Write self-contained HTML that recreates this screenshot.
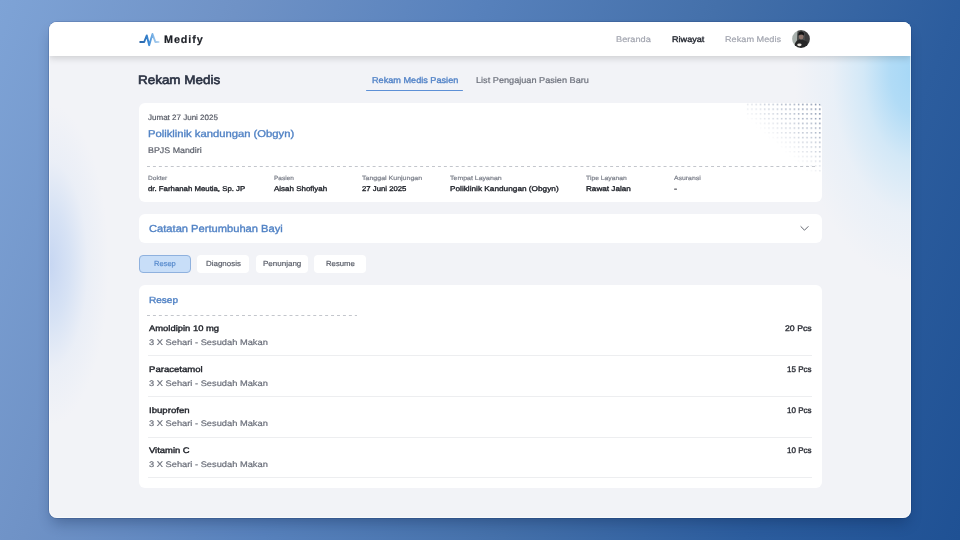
<!DOCTYPE html>
<html><head><meta charset="utf-8"><title>Medify - Rekam Medis</title>
<style>
html,body{margin:0;padding:0;}
body{width:960px;height:540px;overflow:hidden;position:relative;font-family:"Liberation Sans",sans-serif;background:linear-gradient(112deg,#7ea3d6 0%,#6f92c6 20.4%,#5781bc 40.7%,#4470aa 61.1%,#2c5d9e 81.5%,#1f5194 100%);}
.bgv{display:none}
.win{position:absolute;left:49px;top:22px;width:862px;height:495.5px;border-radius:8px;background:#f2f3f7;overflow:hidden;box-shadow:0 0 0 1px rgba(10,30,80,0.15),0 8px 14px -3px rgba(10,30,70,0.33);}
.winhl{position:absolute;left:49px;top:22px;width:862px;height:495.5px;border-radius:8px;box-shadow:inset 0 0 0 1px rgba(255,255,255,0.55);pointer-events:none;}
.glowr{position:absolute;left:745px;top:-160px;width:240px;height:420px;background:radial-gradient(closest-side,rgba(165,215,246,1) 0%,rgba(170,217,246,0.9) 20%,rgba(190,225,247,0.6) 42%,rgba(212,232,248,0.3) 68%,rgba(242,243,247,0) 100%);}
.glowl{position:absolute;left:-60px;top:83px;width:120px;height:320px;background:radial-gradient(closest-side,rgba(198,214,242,1) 0%,rgba(208,222,244,0.8) 35%,rgba(225,233,246,0.45) 65%,rgba(242,243,247,0) 100%);}
.hdr{position:absolute;left:0;top:0;width:862px;height:33.5px;background:#fff;box-shadow:0 2px 7px rgba(0,0,0,0.16);}
.card{position:absolute;background:#fff;border-radius:6px;}
.dash{position:absolute;height:1px;background-image:linear-gradient(90deg,#c3c6cc 0 3.1px,transparent 3.1px 100%);background-size:5.95px 1px;}
.sep{position:absolute;height:1px;background:#edeef0;}
.pill{position:absolute;top:255px;width:52px;height:18px;border-radius:4px;background:#fff;box-sizing:border-box;}
.pill.on{background:#c8def8;border:1px solid #8fb1de;}
.t{position:absolute;white-space:nowrap;transform-origin:0 0;text-rendering:geometricPrecision;}
.texts{position:absolute;left:0;top:0;}
.dots{position:absolute;}

</style></head><body>
<div class="bgv"></div>
<div class="win">
  <div class="glowr"></div>
  <div class="glowl"></div>
  <div class="hdr"></div>
</div>
<div class="winhl"></div>
<!-- logo -->
<svg style="position:absolute;left:137px;top:30px" width="24" height="18" viewBox="0 0 24 18">
  <defs><linearGradient id="lg" x1="2" y1="0" x2="22" y2="0" gradientUnits="userSpaceOnUse">
    <stop offset="0" stop-color="#2a63a4"/><stop offset="0.3" stop-color="#2f74bd"/><stop offset="0.5" stop-color="#3c8cd8"/><stop offset="0.72" stop-color="#86b8e7"/><stop offset="1" stop-color="#bdd8f0"/></linearGradient></defs>
  <polyline points="3.2,12 7.2,12 9.8,5.4 12.2,15.2 15.5,4 18.4,12 21.6,12" fill="none" stroke="url(#lg)" stroke-width="1.9" stroke-linecap="round" stroke-linejoin="round"/>
</svg>
<!-- avatar -->
<svg style="position:absolute;left:792px;top:30.3px" width="18" height="18" viewBox="0 0 18 18">
 <defs><clipPath id="ac"><circle cx="9" cy="9" r="8.9"/></clipPath><filter id="ab" x="-10%" y="-10%" width="120%" height="120%"><feGaussianBlur stdDeviation="0.45"/></filter></defs>
 <g clip-path="url(#ac)"><g filter="url(#ab)">
  <rect x="-2" y="-2" width="22" height="22" fill="#4b4d4c"/>
  <path d="M-2,-2 H6 Q4,9 6,20 H-2 Z" fill="#a9b1ad"/>
  <path d="M12,-2 H20 V20 H12 Q14,9 12,-2 Z" fill="#3a3b3b"/>
  <path d="M2,20 Q2,11 7,9.5 Q12,9 15.5,12 L16,20 Z" fill="#262727"/>
  <ellipse cx="9.2" cy="6.8" rx="2.3" ry="2.6" fill="#8c736b"/>
  <path d="M6.2,5.6 Q6.4,1.4 9.6,1.6 Q12.6,2 12,5.4 Q9.5,3.6 6.2,5.6 Z" fill="#161616"/>
  <ellipse cx="7.4" cy="14.8" rx="2.2" ry="1.4" fill="#e6e2dc"/>
 </g></g>
</svg>
<!-- tab underline -->
<div style="position:absolute;left:366px;top:89.5px;width:97px;height:1.6px;background:#5d90d6;border-radius:1px"></div>
<!-- card1 -->
<div class="card" style="left:139px;top:103px;width:683px;height:99px"></div>
<div class="dash" style="left:146.9px;top:166.3px;width:668px"></div>
<svg style="position:absolute;left:745px;top:100px" width="80" height="72" viewBox="0 0 80 72">
 <defs>
  <pattern id="dp" x="1.2" y="3.7" width="4.24" height="4.73" patternUnits="userSpaceOnUse"><rect x="0.75" y="0" width="1.5" height="1.5" fill="#6a7c9a"/></pattern>
  <linearGradient id="dg" x1="77" y1="3" x2="36.2" y2="49.4" gradientUnits="userSpaceOnUse">
   <stop offset="0" stop-color="#fff" stop-opacity="1"/><stop offset="0.5" stop-color="#fff" stop-opacity="0.5"/><stop offset="1" stop-color="#fff" stop-opacity="0"/></linearGradient>
  <mask id="dm"><rect width="80" height="72" fill="url(#dg)"/></mask>
  <clipPath id="dc"><path d="M0,3 H71 Q77,3 77,9 V72 H0 Z"/></clipPath>
 </defs>
 <rect width="80" height="72" fill="url(#dp)" mask="url(#dm)" clip-path="url(#dc)"/>
</svg>

<!-- card2 -->
<div class="card" style="left:139px;top:214px;width:683px;height:29px"></div>
<svg style="position:absolute;left:799px;top:224px" width="11" height="8" viewBox="0 0 11 8"><polyline points="1.6,2.3 5.5,6.2 9.4,2.3" fill="none" stroke="#62666f" stroke-width="1"/></svg>
<!-- pills -->
<div class="pill on" style="left:139px"></div>
<div class="pill" style="left:197px"></div>
<div class="pill" style="left:255.5px"></div>
<div class="pill" style="left:314.3px"></div>
<!-- card3 -->
<div class="card" style="left:139px;top:285px;width:683px;height:203px"></div>
<div class="dash" style="left:146.9px;top:314.85px;width:210px"></div>
<div class="sep" style="left:148.4px;top:355px;width:664px"></div>
<div class="sep" style="left:148.4px;top:395.8px;width:664px"></div>
<div class="sep" style="left:148.4px;top:436.6px;width:664px"></div>
<div class="sep" style="left:148.4px;top:477.4px;width:664px"></div>

<div class="texts">
<div class="t" style="left:164.3px;top:35px;font-size:10.76px;line-height:10.76px;color:#1d2027;font-weight:700;transform:scaleX(1.001);-webkit-text-stroke:0.2px #1d2027;letter-spacing:0.919px">Medify</div>
<div class="t" style="left:616.0px;top:36px;font-size:8.21px;line-height:8.21px;color:#a4a7b1;font-weight:400;transform:scaleX(1.1208);-webkit-text-stroke:0.2px #a4a7b1">Beranda</div>
<div class="t" style="left:671.9px;top:36px;font-size:8.21px;line-height:8.21px;color:#262a33;font-weight:400;transform:scaleX(1.1072);-webkit-text-stroke:0.35px #262a33">Riwayat</div>
<div class="t" style="left:725.3px;top:36px;font-size:8.21px;line-height:8.21px;color:#a4a7b1;font-weight:400;transform:scaleX(1.1171);-webkit-text-stroke:0.2px #a4a7b1">Rekam Medis</div>
<div class="t" style="left:138.02px;top:74px;font-size:12.43px;line-height:12.43px;color:#2a3142;font-weight:400;transform:scaleX(1.0813);-webkit-text-stroke:0.6px #2a3142">Rekam Medis</div>
<div class="t" style="left:371.6px;top:76px;font-size:8.43px;line-height:8.43px;color:#5585c8;font-weight:400;transform:scaleX(1.0846);-webkit-text-stroke:0.35px #5585c8">Rekam Medis Pasien</div>
<div class="t" style="left:476.0px;top:76px;font-size:8.43px;line-height:8.43px;color:#6d717c;font-weight:400;transform:scaleX(1.0863);-webkit-text-stroke:0.2px #6d717c">List Pengajuan Pasien Baru</div>
<div class="t" style="left:148.4px;top:114px;font-size:7.78px;line-height:7.78px;color:#575b66;font-weight:400;transform:scaleX(1.0317);-webkit-text-stroke:0.2px #575b66">Jumat 27 Juni 2025</div>
<div class="t" style="left:148.4px;top:130px;font-size:9.92px;line-height:9.92px;color:#5283c5;font-weight:400;transform:scaleX(1.1341);-webkit-text-stroke:0.35px #5283c5">Poliklinik kandungan (Obgyn)</div>
<div class="t" style="left:148.4px;top:147px;font-size:8.14px;line-height:8.14px;color:#5c606b;font-weight:400;transform:scaleX(1.0908);-webkit-text-stroke:0.2px #5c606b">BPJS Mandiri</div>
<div class="t" style="left:148.2px;top:176px;font-size:6.03px;line-height:6.03px;color:#7e828c;font-weight:400;transform:scaleX(1.0895);-webkit-text-stroke:0.2px #7e828c">Dokter</div>
<div class="t" style="left:148.2px;top:186px;font-size:6.98px;line-height:6.98px;color:#272a31;font-weight:400;transform:scaleX(1.1203);-webkit-text-stroke:0.35px #272a31">dr. Farhanah Meutia, Sp. JP</div>
<div class="t" style="left:274.2px;top:176px;font-size:6.03px;line-height:6.03px;color:#7e828c;font-weight:400;transform:scaleX(1.0805);-webkit-text-stroke:0.2px #7e828c">Pasien</div>
<div class="t" style="left:274.2px;top:186px;font-size:6.98px;line-height:6.98px;color:#272a31;font-weight:400;transform:scaleX(1.1435);-webkit-text-stroke:0.35px #272a31">Aisah Shofiyah</div>
<div class="t" style="left:362.0px;top:176px;font-size:6.03px;line-height:6.03px;color:#7e828c;font-weight:400;transform:scaleX(1.1678);-webkit-text-stroke:0.2px #7e828c">Tanggal Kunjungan</div>
<div class="t" style="left:362.0px;top:186px;font-size:6.98px;line-height:6.98px;color:#272a31;font-weight:400;transform:scaleX(1.1115);-webkit-text-stroke:0.35px #272a31">27 Juni 2025</div>
<div class="t" style="left:450.0px;top:176px;font-size:6.03px;line-height:6.03px;color:#7e828c;font-weight:400;transform:scaleX(1.1613);-webkit-text-stroke:0.2px #7e828c">Tempat Layanan</div>
<div class="t" style="left:450.0px;top:186px;font-size:6.98px;line-height:6.98px;color:#272a31;font-weight:400;transform:scaleX(1.1832);-webkit-text-stroke:0.35px #272a31">Poliklinik Kandungan (Obgyn)</div>
<div class="t" style="left:586.1px;top:176px;font-size:6.03px;line-height:6.03px;color:#7e828c;font-weight:400;transform:scaleX(1.123);-webkit-text-stroke:0.2px #7e828c">Tipe Layanan</div>
<div class="t" style="left:586.1px;top:186px;font-size:6.98px;line-height:6.98px;color:#272a31;font-weight:400;transform:scaleX(1.1671);-webkit-text-stroke:0.35px #272a31">Rawat Jalan</div>
<div class="t" style="left:674.0px;top:176px;font-size:6.03px;line-height:6.03px;color:#7e828c;font-weight:400;transform:scaleX(1.1401);-webkit-text-stroke:0.2px #7e828c">Asuransi</div>
<div class="t" style="left:674.0px;top:186px;font-size:6.98px;line-height:6.98px;color:#272a31;font-weight:400;transform:scaleX(1.3333);-webkit-text-stroke:0.35px #272a31">-</div>
<div class="t" style="left:148.5px;top:225px;font-size:10.17px;line-height:10.17px;color:#5283c5;font-weight:400;transform:scaleX(1.097);-webkit-text-stroke:0.35px #5283c5">Catatan Pertumbuhan Bayi</div>
<div class="t" style="left:153.9px;top:260px;font-size:7.41px;line-height:7.41px;color:#5a8ccd;font-weight:400;transform:scaleX(1.0193);-webkit-text-stroke:0.2px #5a8ccd">Resep</div>
<div class="t" style="left:205.9px;top:260px;font-size:7.41px;line-height:7.41px;color:#5b5f6a;font-weight:400;transform:scaleX(1.0726);-webkit-text-stroke:0.2px #5b5f6a">Diagnosis</div>
<div class="t" style="left:263.1px;top:260px;font-size:7.41px;line-height:7.41px;color:#5b5f6a;font-weight:400;transform:scaleX(1.0808);-webkit-text-stroke:0.2px #5b5f6a">Penunjang</div>
<div class="t" style="left:326.25px;top:260px;font-size:7.41px;line-height:7.41px;color:#5b5f6a;font-weight:400;transform:scaleX(1.047);-webkit-text-stroke:0.2px #5b5f6a">Resume</div>
<div class="t" style="left:148.7px;top:296px;font-size:8.87px;line-height:8.87px;color:#5283c5;font-weight:400;transform:scaleX(1.1331);-webkit-text-stroke:0.35px #5283c5">Resep</div>
<div class="t" style="left:148.9px;top:325px;font-size:8.14px;line-height:8.14px;color:#20232a;font-weight:400;transform:scaleX(1.1584);-webkit-text-stroke:0.35px #20232a">Amoldipin 10 mg</div>
<div class="t" style="left:148.9px;top:339px;font-size:8.14px;line-height:8.14px;color:#6b6f7a;font-weight:400;transform:scaleX(1.1436);-webkit-text-stroke:0.2px #6b6f7a">3 X Sehari - Sesudah Makan</div>
<div class="t" style="left:785.0px;top:325px;font-size:8.14px;line-height:8.14px;color:#2a2d35;font-weight:400;transform:scaleX(1.0736);-webkit-text-stroke:0.35px #2a2d35">20 Pcs</div>
<div class="t" style="left:148.9px;top:366px;font-size:8.14px;line-height:8.14px;color:#20232a;font-weight:400;transform:scaleX(1.1767);-webkit-text-stroke:0.35px #20232a">Paracetamol</div>
<div class="t" style="left:148.9px;top:380px;font-size:8.14px;line-height:8.14px;color:#6b6f7a;font-weight:400;transform:scaleX(1.1436);-webkit-text-stroke:0.2px #6b6f7a">3 X Sehari - Sesudah Makan</div>
<div class="t" style="left:787.1px;top:366px;font-size:8.14px;line-height:8.14px;color:#2a2d35;font-weight:400;transform:scaleX(0.9888);-webkit-text-stroke:0.35px #2a2d35">15 Pcs</div>
<div class="t" style="left:148.9px;top:407px;font-size:8.14px;line-height:8.14px;color:#20232a;font-weight:400;transform:scaleX(1.1829);-webkit-text-stroke:0.35px #20232a">Ibuprofen</div>
<div class="t" style="left:148.9px;top:420px;font-size:8.14px;line-height:8.14px;color:#6b6f7a;font-weight:400;transform:scaleX(1.1436);-webkit-text-stroke:0.2px #6b6f7a">3 X Sehari - Sesudah Makan</div>
<div class="t" style="left:787.1px;top:407px;font-size:8.14px;line-height:8.14px;color:#2a2d35;font-weight:400;transform:scaleX(0.9888);-webkit-text-stroke:0.35px #2a2d35">10 Pcs</div>
<div class="t" style="left:148.9px;top:447px;font-size:8.14px;line-height:8.14px;color:#20232a;font-weight:400;transform:scaleX(1.159);-webkit-text-stroke:0.35px #20232a">Vitamin C</div>
<div class="t" style="left:148.9px;top:461px;font-size:8.14px;line-height:8.14px;color:#6b6f7a;font-weight:400;transform:scaleX(1.1436);-webkit-text-stroke:0.2px #6b6f7a">3 X Sehari - Sesudah Makan</div>
<div class="t" style="left:787.1px;top:447px;font-size:8.14px;line-height:8.14px;color:#2a2d35;font-weight:400;transform:scaleX(0.9888);-webkit-text-stroke:0.35px #2a2d35">10 Pcs</div>
</div>
</body></html>
